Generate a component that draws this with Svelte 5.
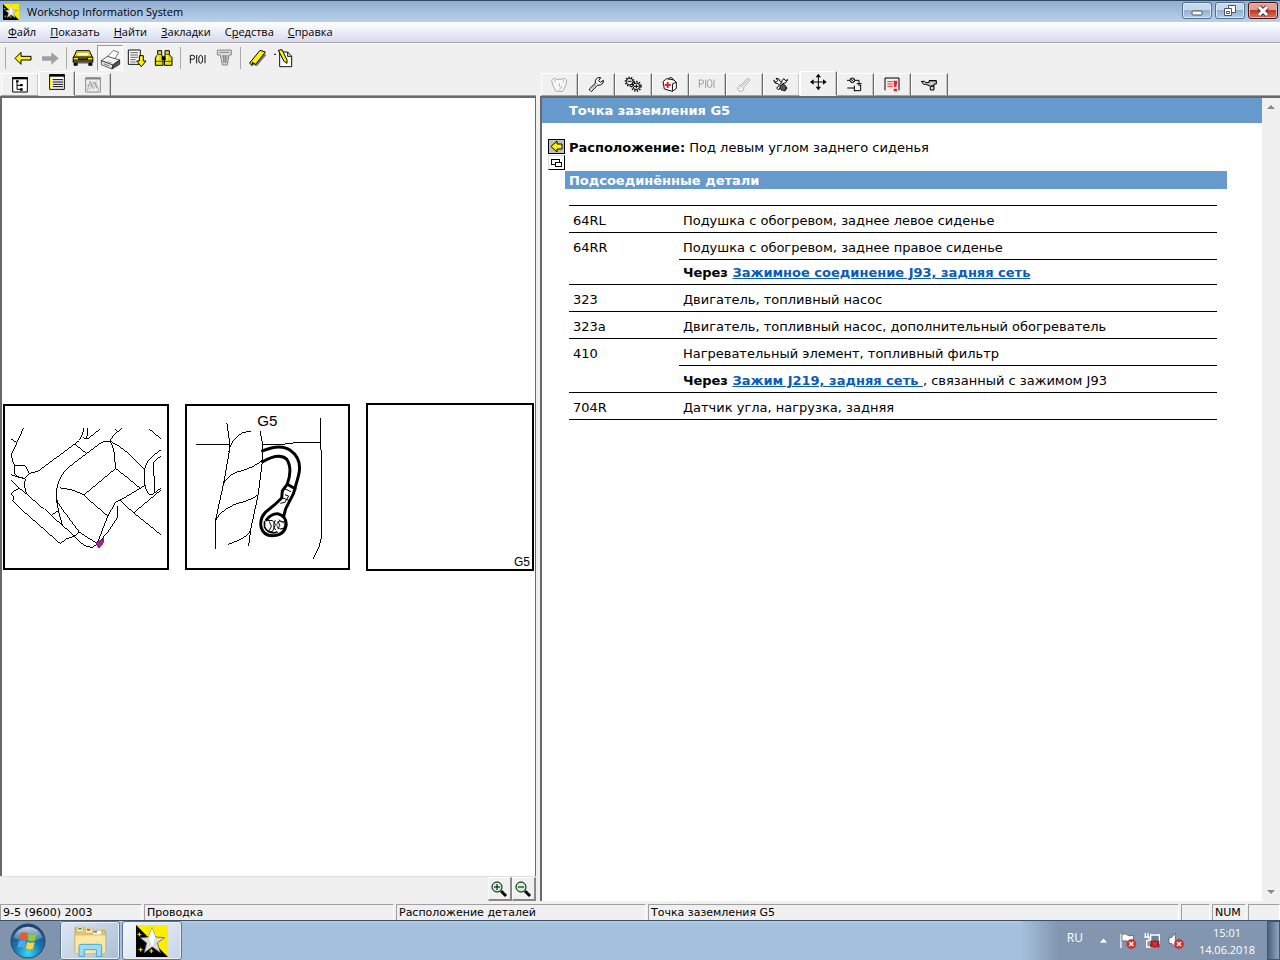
<script>
  const menus = [
    ['', 'Ф', 'айл'],
    ['', 'П', 'оказать'],
    ['', 'Н', 'айти'],
    ['', 'З', 'акладки'],
    ['С', 'р', 'едства'],
    ['', 'С', 'правка']
  ];

  const star =
    '<path d="M0 0H96V96H0z" fill="#ffee00"/><path d="M0 0L96 96H0z" fill="#000"/><path d="M48 8L58 36L86 38L64 54L74 84L49 66L24 84L32 54L12 38L38 36z" fill="#ddd" stroke="#444" stroke-width="2"/><path d="M48 8L58 36L49 66L38 36z" fill="#fff"/><path d="M10 22v12M4 28h12M14 68v12M8 74h12M46 72v12M40 78h12" stroke="#ffee00" stroke-width="3"/>';

  const toolGroups = [
    [
      { label: 'Назад', box: '30 132 78 78', art: '<path d="M45 172L63 154V166H93V177H63V190z" fill="#fff200" stroke="#000" stroke-width="3"/>' },
      { label: 'Вперёд', box: '111 132 78 78', art: '<path d="M126 166H154V154L176 172L154 191V179H126z" fill="#a0a0a0"/>' }
    ],
    [
      { label: 'Автомобиль', box: '210 132 78 78', art: '<path d="M230 149H268L277 168H221z" fill="#f2e200" stroke="#000" stroke-width="3"/><path d="M234 155H264L269 165H229z" fill="#fffdd0" stroke="#555" stroke-width="1"/><path d="M218 168H280V185H218z" fill="#111"/><path d="M221 173H234M264 173H277" stroke="#ffe900" stroke-width="5"/><path d="M236 171H262M222 180H276" stroke="#d8ce30" stroke-width="2"/><path d="M221 185H233V194H221zM265 185H277V194H265z" fill="#000"/><path d="M234 187H264" stroke="#998" stroke-width="3"/>' },
      { label: 'Печать', on: true, box: '294 132 78 78', art: '<path d="M322 164L340 145L356 151L344 172z" fill="#fff" stroke="#333" stroke-width="2"/><path d="M304 176L322 163L359 174L338 189z" fill="#f4f4f4" stroke="#111" stroke-width="2"/><path d="M304 176V188L336 201L338 189z" fill="#eee" stroke="#111" stroke-width="2"/><path d="M338 189L359 174V187L336 201z" fill="#555" stroke="#111" stroke-width="2"/><path d="M311 185L329 192" stroke="#777" stroke-width="3"/><path d="M321 178L337 183" stroke="#888" stroke-width="2"/>' },
      { label: 'Документ', box: '372 132 78 78', art: '<path d="M385 147H421V190H385z" fill="#fff" stroke="#111" stroke-width="3"/><path d="M391 155H414M391 162H414M391 169H414M391 176H407M391 183H407" stroke="#111" stroke-width="2"/><path d="M418 164H430V180H438L424 197L410 180H418z" fill="#fff200" stroke="#000" stroke-width="3"/>' },
      { label: 'Найти', box: '453 132 78 78', art: '<path d="M473 149H485V161L489 170V193H466V170L473 161zM495 149H508V161L516 170V193H493V170L495 161z" fill="#e5df00" stroke="#000" stroke-width="3"/><path d="M485 166H497V177H485z" fill="#000"/><path d="M474 160V187M501 160V187" stroke="#ffffa0" stroke-width="3"/><path d="M466 181H489M493 181H516M473 160H485M496 160H509" stroke="#000" stroke-width="2"/>' }
    ],
    [
      { label: 'PIOI', box: '549 132 78 78', art: '<path d="M568 187V163H575Q581 163 581 169Q581 175 575 175H568M587 162V187M612 162V187" fill="none" stroke="#111" stroke-width="3"/><ellipse cx="599" cy="175" rx="6" ry="12" fill="none" stroke="#111" stroke-width="3"/>' },
      { label: 'Телефон', box: '630 132 78 78', art: '<path d="M649 147H691V162H684L679 192H664L658 162H649z" fill="#ddd" stroke="#858585" stroke-width="3"/><path d="M655 154H685M663 165H681M665 171H680M666 177H679M668 183H677M668 163V186M674 163V186" stroke="#858585" stroke-width="3"/>' }
    ],
    [
      { label: 'Закладка', box: '735 132 78 78', art: '<path d="M752 188L783 150L799 162L771 195L760 192z" fill="#777"/><path d="M749 186L780 148L796 153L767 190L757 184L756 194z" fill="#fff200" stroke="#000" stroke-width="3"/>' },
      { label: 'Заметка', box: '816 132 78 78', art: '<path d="M839 153H863L875 166V197H839z" fill="#fff" stroke="#111" stroke-width="3"/><path d="M863 153V166H875" fill="none" stroke="#111" stroke-width="3"/><path d="M835 148L846 146L861 177V187L852 181z" fill="#fff200" stroke="#000" stroke-width="3"/><path d="M822 160H828" stroke="#000" stroke-width="3"/>' }
    ]
  ];

  const leftTabs = [
    { label: 'Структура', box: '30 220 60 60', art: '<path d="M38 231H82V274H38z" fill="#fff" stroke="#000" stroke-width="3"/><path d="M37 229H83V236H37z"/><path d="M51 242V266H61M51 254H60" fill="none" stroke="#000" stroke-width="3"/><path d="M48 239H56V245H48zM60 250H68V257H60zM60 263H68V270H60z"/>' },
    { label: 'Иллюстрации', on: true, box: '141 217 60 60', art: '<path d="M149 225H193V269H149z" fill="#fff" stroke="#000" stroke-width="3"/><path d="M148 224H194V231H148z"/><path d="M158 240H189M158 247H189M158 254H189M158 261H189" stroke="#000" stroke-width="3"/><path d="M152 234V266" stroke="#ffe800" stroke-width="4"/>' },
    { label: 'Графики', box: '252 220 60 60', art: '<g fill="none" stroke="#888" stroke-width="3"><path d="M260 231H304V274H260z"/><path d="M260 234H304" stroke-width="5"/><path d="M265 269L273 241L283 265L291 248L299 270M264 254H274L280 246H287L294 263M270 268L282 252L294 240" stroke-width="2"/></g>' }
  ];

  const rightTabs = [
    { label: 'Характеристики', box: '57 24 60 60', art: '<path d="M65 43L72 37L80 40H95L103 37L110 43L108 56L98 76H78L68 56z" fill="#f8f8f8" stroke="#888" stroke-width="2"/><path d="M75 43V49M100 43V49M88 52V62M96 60L88 72" stroke="#888" stroke-width="2"/>' },
    { label: 'Ремонт', box: '171 24 60 60', art: '<path d="M183 73L187 77L205 58Q216 59 222 51L223 43L214 49L209 44L215 35Q203 33 199 44V52L181 69z" fill="#fff" stroke="#000" stroke-width="3"/><path d="M187 70L205 51" stroke="#555" stroke-width="2"/>' },
    { label: 'Агрегаты', box: '282 24 60 60', art: '<g fill="#eee" stroke="#000" stroke-width="3"><circle cx="302" cy="47" r="10"/><circle cx="302" cy="47" r="13" fill="none" stroke-width="4" stroke-dasharray="4 4"/><circle cx="322" cy="61" r="10"/><circle cx="322" cy="61" r="14" fill="none" stroke-width="5" stroke-dasharray="4 4"/><path d="M296 46H308M315 61H329M322 55V67"/></g>' },
    { label: 'Диагностика', box: '396 24 60 60', art: '<path d="M405 47L416 38L438 42L445 49V67L433 76L409 69z" fill="#fff" stroke="#111" stroke-width="3"/><path d="M420 39Q430 29 438 43M433 76L434 53L445 49" fill="none" stroke="#111" stroke-width="3"/><path d="M419 48V66M410 57H428" stroke="#ee1c24" stroke-width="6"/>' },
    { label: 'PIOI', box: '504 24 60 60', art: '<path d="M511 65V42H518Q524 42 524 48Q524 54 518 54H511M530 41V66M555 41V66" fill="none" stroke="#777" stroke-width="2"/><ellipse cx="542" cy="53" rx="7" ry="12" fill="none" stroke="#777" stroke-width="2"/>' },
    { label: 'Датчики', box: '615 24 60 60', art: '<path d="M637 57L655 37L663 43L644 64Q646 76 635 76Q624 75 626 65Q629 58 637 57zM632 68L658 41" fill="#f8f8f8" stroke="#888" stroke-width="2"/>' },
    { label: 'Обслуживание', box: '726 24 60 60', art: '<path d="M734 43L741 49L746 44L741 37Q752 36 753 46L774 66L768 74L747 53Q736 54 734 43z" fill="#fff" stroke="#000" stroke-width="3"/><path d="M761 53L770 50L776 41L769 44L765 38Q757 42 758 50L743 66L749 72z" fill="#fff" stroke="#000" stroke-width="3"/><path d="M752 60L764 54L772 62L768 75L756 72z" fill="#555" stroke="#000" stroke-width="2"/>' },
    { label: 'Расположение', on: true, box: '837 17 60 60', art: '<path d="M868 26V68M847 47H889" stroke="#000" stroke-width="3"/><path d="M868 22L876 33H860zM868 72L876 61H860zM843 47L854 39V55zM893 47L882 39V55z"/>' },
    { label: 'Схемы', box: '951 24 60 60', art: '<g fill="none" stroke="#000" stroke-width="3"><circle cx="973" cy="43" r="7"/><path d="M968 38L978 48M978 38L968 48" stroke-width="2"/><path d="M957 43H966M980 43H993V53M986 53H1001M990 57H998V74H979M958 66H979M979 59V76"/></g>' },
    { label: 'Неисправности', box: '1059 24 60 60', art: '<path d="M1068 73V36H1110V73" fill="none" stroke="#000" stroke-width="3"/><path d="M1075 47H1091M1075 54H1091M1075 61H1091" stroke="#e33" stroke-width="3"/><path d="M1093 44H1105L1102 63H1096zM1094 68H1104V76H1094z" fill="#ee1c24"/>' },
    { label: 'Инструмент', box: '1170 24 60 60', art: '<path d="M1177 46H1186L1191 50H1200V44H1222V54H1215V72H1204V60L1190 55H1184z" fill="#ccc" stroke="#000" stroke-width="3"/><path d="M1200 44H1222M1206 60H1215" fill="none" stroke="#000" stroke-width="4"/>' }
  ];

  const parts = [
    { code: '64RL', text: 'Подушка с обогревом, заднее левое сиденье' },
    { code: '64RR', text: 'Подушка с обогревом, заднее правое сиденье', link: 'Зажимное соединение J93, задняя сеть', tail: '' },
    { code: '323', text: 'Двигатель, топливный насос' },
    { code: '323a', text: 'Двигатель, топливный насос, дополнительный обогреватель' },
    { code: '410', text: 'Нагревательный элемент, топливный фильтр', link: 'Зажим J219, задняя сеть ', tail: ', связанный с зажимом J93' },
    { code: '704R', text: 'Датчик угла, нагрузка, задняя' }
  ];

  const status = ['9-5 (9600) 2003', 'Проводка', 'Расположение деталей', 'Точка заземления G5', '', 'NUM', ''];
</script>

{#snippet icon(item, size)}
  <svg width={size} height={size} viewBox={item.box} aria-hidden="true">{@html item.art}</svg>
{/snippet}

{#snippet tabs(list, name)}
  <div class="tabs" role="tablist" aria-label={name}>
    {#each list as tab}
      <button class="tab" class:on={tab.on} role="tab" aria-selected={!!tab.on} aria-label={tab.label}>
        {@render icon(tab, 20)}
      </button>
    {/each}
    <span class="tabfill"></span>
  </div>
{/snippet}

<div class="screen">
  <header class="titlebar">
    {@render icon({ box: '0 0 96 96', art: star }, 16)}
    <h1>Workshop Information System</h1>
    <div class="winbtns">
      <button aria-label="Свернуть"><svg width="28" height="16" viewBox="0 0 28 16"><rect x="9" y="8" width="10" height="4" rx="1" fill="#fff" stroke="#4a5566" /></svg></button>
      <button aria-label="Восстановить"><svg width="28" height="16" viewBox="0 0 28 16" fill="#fff" stroke="#4a5566"><path d="M12.500 2.500h7v7h-7z" /><path d="M8.500 5.500h7v7h-7zM10.500 8.500h3v2h-3z" /></svg></button>
      <button class="close" aria-label="Закрыть"><svg width="28" height="16" viewBox="0 0 28 16"><path d="M10 4L18 12M18 4L10 12" stroke="#5a3035" stroke-width="5" /><path d="M10 4L18 12M18 4L10 12" stroke="#fff" stroke-width="3" /></svg></button>
    </div>
  </header>

  <nav class="menubar">
    {#each menus as [a, key, b]}
      <button>{a}<u>{key}</u>{b}</button>
    {/each}
  </nav>

  <div class="toolbar">
    {#each toolGroups as group}
      <div class="group">
        {#each group as tool}
          <button class:on={tool.on} aria-label={tool.label}>{@render icon(tool, 26)}</button>
        {/each}
      </div>
    {/each}
  </div>

  <main>
    <section class="left">
      {@render tabs(leftTabs, 'Слева')}
      <div class="canvas">
        <div class="figure">
          <svg viewBox="15 15 489 489" fill="none" stroke="#000" stroke-width="3" shape-rendering="crispEdges">
            <path d="M71 82L52 124L34 162Q36 180 44 196M34 115L52 126M44 198Q50 191 66 194Q78 191 82 206L88 219L76 234Q58 234 45 222Q42 208 44 198M34 223L52 229L76 235M88 219Q104 217 118 210L226 130L240 119L248 104L254 82M266 82L262 114M250 108Q258 118 266 114L302 85M226 130L262 159" />
            <path d="M34 241L58 263L80 281L154 346L189 376L222 406M76 235Q70 258 80 281M58 265L40 274L34 280L42 290L38 302L60 324L182 431L202 416L222 410L240 397M222 406Q242 430 262 441L280 442L290 436M154 346L178 331" />
            <path d="M170 296Q168 240 200 208Q218 190 262 159L304 127Q320 119 332 121Q340 130 344 148L350 204L256 282V288L326 348M180 262Q220 266 256 284M170 296Q178 316 204 348L240 397L292 430M170 296Q176 340 189 376M332 121L342 106L368 82M350 86L358 94M332 121Q360 134 386 156L436 206M350 204L388 234L424 264L372 295L350 306L326 348Q310 390 294 430M424 264L438 255M364 302L404 338L486 404M404 338L486 270M356 318V350Q326 402 292 434M450 84L486 113M486 148Q436 180 436 216Q436 260 446 276Q454 290 466 278Q468 262 464 188Q472 172 486 168M464 280L486 264" />
            <path d="M290 428L315 416L312 430L299 446z" fill="#a3238e" stroke="#6d1565" stroke-width="2" />
          </svg>
        </div>
        <div class="figure">
          <svg viewBox="21 15 490 490" fill="none" stroke="#000" stroke-width="3">
            <text x="234" y="77" font-size="46" fill="#000" stroke="none">G5</text>
            <g shape-rendering="crispEdges">
              <path d="M48 133H148M142 68L149 116V154L132 250L106 368V447M242 90L250 130V178L237 282L214 390L208 440M427 52V148L430 160V382Q430 420 420 446L403 479M250 131L340 130L344 127H427" />
              <path d="M147 155Q154 116 190 96L214 91M133 248Q146 224 174 215Q224 202 249 180M109 360Q124 332 166 313Q222 298 236 284M145 434Q202 418 214 392" />
            </g>
            <g stroke-width="9" stroke-linecap="round" stroke-linejoin="round">
              <path d="M250 151Q304 128 334 149Q372 176 359 226L344 280L320 327L314 350M250 184Q300 155 323 176Q342 204 325 252L310 272L308 294L286 315L260 336Q240 356 246 384Q254 410 284 408Q318 406 322 374Q322 350 298 342Q278 340 262 360M325 252L349 266" />
              <path d="M256 365V382Q270 406 294 397" stroke-width="5" />
            </g>
            <path d="M314 264L336 275M307 292L332 302L323 320M318 284L329 288L318 307L304 310M266 362H280L289 374L280 396L264 394M270 365L277 379L270 393M289 361Q278 378 290 391M299 360L309 367L318 365M304 388L315 386M297 364L302 377L297 388" />
            <circle cx="305" cy="376" r="12" stroke-width="2" />
          </svg>
        </div>
        <div class="figure last"><span>G5</span></div>
      </div>
      <div class="zoombar">
        <button aria-label="Увеличить"><svg width="20" height="20" viewBox="0 0 20 20"><circle cx="8" cy="8" r="5" fill="#c8f5cf" stroke="#000" /><path d="M5 8H11M8 5V11" stroke="#000" stroke-width="1" /><path d="M12 12L17 17" stroke="#000" stroke-width="3" /></svg></button>
        <button aria-label="Уменьшить"><svg width="20" height="20" viewBox="0 0 20 20"><circle cx="8" cy="8" r="5" fill="#c8f5cf" stroke="#000" /><path d="M5 8H11" stroke="#000" stroke-width="1" /><path d="M12 12L17 17" stroke="#000" stroke-width="3" /></svg></button>
      </div>
    </section>

    <section class="right">
      {@render tabs(rightTabs, 'Справа')}
      <div class="view">
        <article>
          <h2>Точка заземления G5</h2>
          <div class="location">
            <div class="mini">
              <button class="grey" aria-label="Назад"><svg width="16" height="15" viewBox="0 0 16 15"><path d="M2 6.500L8 1V4H13V9H8V12z" fill="#fff200" stroke="#000" /></svg></button>
              <button aria-label="Показать"><svg width="16" height="14" viewBox="0 0 16 14" fill="none" stroke="#000" shape-rendering="crispEdges"><path d="M2.500 3.500h8v5h-8z" /><path d="M6.500 6.500h6v4h-6z" fill="#fff" /></svg></button>
            </div>
            <p><b>Расположение:</b> Под левым углом заднего сиденья</p>
          </div>
          <h3>Подсоединённые детали</h3>
          <table>
            <tbody>
              {#each parts as part}
                <tr>
                  <th scope="row" rowspan={part.link ? 2 : 1}>{part.code}</th>
                  <td>{part.text}</td>
                </tr>
                {#if part.link}
                  <tr>
                    <td class:tight={!part.tail}><b>Через <a href="#part">{part.link}</a></b>{part.tail}</td>
                  </tr>
                {/if}
              {/each}
            </tbody>
          </table>
        </article>
        <div class="scroll">
          <svg width="8" height="4" viewBox="0 0 8 4"><path d="M0 4L4 0L8 4z" fill="#888" /></svg>
          <svg width="8" height="4" viewBox="0 0 8 4"><path d="M0 0L4 4L8 0z" fill="#888" /></svg>
        </div>
      </div>
    </section>
  </main>

  <div class="status">
    {#each status as cell}<span>{cell}</span>{/each}
  </div>

  <footer class="taskbar">
    <button class="start" aria-label="Пуск">
      <svg width="36" height="36" viewBox="0 0 108 108">
        <defs>
          <radialGradient id="orb" cx="50%" cy="85%" r="85%"><stop offset="0" stop-color="#3fd8f4" /><stop offset=".45" stop-color="#1878b0" /><stop offset="1" stop-color="#1c3f70" /></radialGradient>
          <linearGradient id="gloss" x2="0" y2="1"><stop offset="0" stop-color="#fff" stop-opacity=".75" /><stop offset="1" stop-color="#fff" stop-opacity=".1" /></linearGradient>
        </defs>
        <circle cx="54" cy="54" r="51" fill="url(#orb)" stroke="#2a4668" stroke-width="3" />
        <path d="M10 44A46 46 0 0 1 98 44Q54 66 10 44z" fill="url(#gloss)" />
        <path d="M32 31Q42 24 53 31L49 51Q38 45 27 51z" fill="#ee5a24" />
        <path d="M57 33Q68 38 80 32L75 53Q64 58 53 52z" fill="#8fc93a" />
        <path d="M26 55Q37 49 48 55L44 75Q33 69 22 75z" fill="#49a8ee" />
        <path d="M52 57Q63 62 74 57L69 77Q58 82 47 76z" fill="#ffd23a" />
      </svg>
    </button>
    <button class="app" aria-label="Проводник">
      <svg width="34" height="32" viewBox="0 0 102 96">
        <path d="M6 8H34L40 16H92Q98 16 98 22V84H6z" fill="#e9c565" stroke="#b8923c" stroke-width="2" />
        <path d="M12 6H30V20H12zM38 10H60V24H38zM58 16H86V30H58z" fill="#fffbe8" stroke="#c7a955" stroke-width="2" />
        <path d="M16 9H26V14H16z" fill="#2fa35a" /><path d="M42 12H52V17H42z" fill="#d9452f" /><path d="M62 18H72V23H62z" fill="#3c8cd0" />
        <path d="M6 30H98V86H6z" fill="#fae8a4" stroke="#d5b763" stroke-width="2" />
        <path d="M18 94V64Q18 58 24 58H80Q86 58 86 64V94H70V74H34V94z" fill="#9bdcf5" stroke="#4ea5d0" stroke-width="3" />
      </svg>
    </button>
    <button class="app active" aria-label="Workshop Information System">{@render icon({ box: '0 0 96 96', art: star }, 32)}</button>
    <div class="tray">
      <span class="lang">RU</span>
      <svg width="9" height="5" viewBox="0 0 9 5"><path d="M0 5L4.500 0L9 5z" fill="#fff" stroke="#566" stroke-width=".5" /></svg>
      <svg width="64" height="18" viewBox="0 0 192 54">
        <path d="M3 6V48" stroke="#fff" stroke-width="4" /><path d="M6 7Q16 3 24 10Q32 13 40 10V30Q30 33 24 28Q14 24 6 28z" fill="#fff" stroke="#445" stroke-width="2" />
        <circle cx="34" cy="36" r="14" fill="#d9302c" stroke="#9c1f1c" /><path d="M28 30L40 42M40 30L28 42" stroke="#fff" stroke-width="4" />
        <path d="M76 3V18M84 3V18M73 15H87V26H80V45H97" fill="none" stroke="#fff" stroke-width="4" /><path d="M92 9H118V34H92z" fill="#6d7f95" stroke="#fff" stroke-width="4" />
        <path d="M91 26H118V46H91z" fill="#a31419" /><path d="M97 29L112 43M112 29L97 43" stroke="#e83b3f" stroke-width="4" />
        <path d="M147 17H154L166 4V45L154 34H147z" fill="#fff" stroke="#445" stroke-width="2" />
        <circle cx="177" cy="36" r="14" fill="#d9302c" stroke="#9c1f1c" /><path d="M171 30L183 42M183 30L171 42" stroke="#fff" stroke-width="4" />
      </svg>
      <time><span>15:01</span><span>14.06.2018</span></time>
    </div>
    <button class="desktop" aria-label="Показать рабочий стол"></button>
  </footer>
</div>

<style>
  :global(body) { margin: 0; }
  * { box-sizing: border-box; }
  button { padding: 0; border: 0; background: none; font: inherit; color: inherit; }
  svg { display: block; }
  .screen {
    min-height: 100vh;
    display: flex;
    flex-direction: column;
    background: #f0f0f0;
    font: 11px "Open Sans", "Noto Sans", sans-serif;
    color: #000;
  }

  .titlebar {
    display: flex;
    align-items: center;
    gap: 8px;
    height: 22px;
    padding-left: 3px;
    border-top: 1px solid #2d4661;
    background: linear-gradient(#8fadcf, #a5c0de 50%, #b9d0ea);
  }
  h1 { margin: 0; flex: 1; font-size: 11px; line-height: 20px; font-weight: 400; }
  .winbtns { display: flex; gap: 3px; align-self: flex-start; padding: 1px 2px 0 0; }
  .winbtns button {
    width: 30px;
    height: 17px;
    display: grid;
    place-items: center;
    border: 1px solid #52708f;
    border-radius: 3px;
    background: linear-gradient(#c5d8ec 48%, #94b0cf 50%, #b3cde6);
    box-shadow: inset 0 0 0 1px #dbe8f5;
  }
  .winbtns .close { border-color: #43141c; background: linear-gradient(#e3a093 45%, #bf3a26 50%, #d8785c); box-shadow: inset 0 0 0 1px #eab6aa; }

  .menubar {
    display: flex;
    gap: 14px;
    height: 21px;
    padding: 0 8px;
    background: linear-gradient(#fff, #eef1fa 40%, #d6daee);
    border-bottom: 1px solid #a5a5aa;
    line-height: 20px;
  }

  .toolbar { display: flex; height: 29px; padding: 3px 0 3px 5px; border-top: 1px solid #fff; }
  .group { display: flex; align-items: center; gap: 1px; padding: 0 3px; border-left: 1px solid #aaa; }
  .group:first-child { padding-left: 4px; }
  .group:last-child { padding-left: 4px; }
  .group button { width: 26px; height: 26px; }
  .group button.on { border: 1px solid; border-color: #999 #fff #fff #999; background: #f6f6f6; display: grid; place-items: center; }

  main { flex: 1; display: grid; grid-template-columns: minmax(0, 42fr) minmax(0, 58fr); gap: 4px; }
  section { display: flex; flex-direction: column; min-width: 0; }
  .tabs { display: flex; align-items: flex-end; height: 24px; flex: none; padding-left: 1px; }
  .tab {
    width: 37px;
    height: 23px;
    display: grid;
    place-items: center;
    padding-bottom: 2px;
    border-top: 1px solid #fff;
    border-right: 1px solid #696969;
    border-bottom: 1px solid #a0a0a0;
    box-shadow: inset -1px 0 #c8c8c8, inset 1px 0 #fff;
  }
  .tab.on { height: 25px; border-bottom-color: #f0f0f0; padding-bottom: 4px; }
  .tab:has(+ .on) { border-right-color: #fff; }
  .tabfill { flex: 1; border-bottom: 1px solid #a0a0a0; }
  .left .tab { width: 36px; }
  .left .tab:first-child { width: 38px; }
  .canvas {
    flex: 1;
    display: flex;
    align-items: center;
    gap: 16px;
    padding: 0 1px;
    border: solid #696969;
    border-width: 2px 1px 0 2px;
    background: #fff;
  }
  .figure { flex: 1; min-width: 0; aspect-ratio: 1; border: 2px solid #000; font-family: "Liberation Sans", sans-serif; }
  .figure svg { width: 100%; height: 100%; }
  .figure.last { display: flex; align-items: flex-end; justify-content: flex-end; padding-right: 2px; font-size: 12px; line-height: 14px; }
  .zoombar { display: flex; justify-content: flex-end; height: 25px; border-top: 1px solid #ddd; }
  .zoombar button {
    width: 24px;
    display: grid;
    place-items: center;
    border: solid;
    border-width: 1px 2px 2px 1px;
    border-color: #fff #888 #888 #fff;
  }

  .view { flex: 1; display: flex; border: solid #696969; border-width: 2px 0 0 2px; background: #fff; }
  article { flex: 1; min-width: 0; font: 13px/16px "DejaVu Sans", Verdana, sans-serif; }
  h2, h3 { margin: 0; background: #6699cc; color: #fff; font-size: 13px; }
  h2 { padding: 0 27px; line-height: 25px; }
  .location { display: flex; gap: 4px; padding: 16px 6px 0; }
  .location p { margin: 0; padding-top: 1px; }
  .mini { display: flex; flex-direction: column; gap: 1px; }
  .mini button { height: 15px; border: 1px solid; border-color: #ddd #000 #000 #ddd; overflow: hidden; width: 17px; }
  .mini .grey { background: #c0c0c0; border-color: #000; }
  h3 { margin: 1px 35px 16px 23px; padding: 2px 4px 0; line-height: 16px; }
  table { width: calc(100% - 72px); margin-left: 27px; border-collapse: collapse; border-bottom: 1px solid #000; }
  th, td { height: 27px; padding: 2px 4px 0; border-top: 1px solid #000; font-weight: 400; text-align: left; vertical-align: top; line-height: 24px; padding-top: 3px; line-height: 23px; }
  th { width: 110px; }
  td.tight { height: 25px; padding-top: 1px; }
  a { color: #0a5cb8; text-decoration: underline; white-space: pre; }
  .scroll { width: 18px; flex: none; display: flex; flex-direction: column; align-items: center; justify-content: space-between; padding: 7px 0; background: #f0f0f0; }

  .status {
    display: grid;
    grid-template-columns: 142px 250px 250px 1fr 29px 34px 32px;
    gap: 2px;
    height: 19px;
    padding-top: 3px;
    background: #f0f0f0;
    font: 11px/15px "DejaVu Sans", Verdana, sans-serif;
  }
  .status span { border: 1px solid; border-color: #a0a0a0 #fff #fff #a0a0a0; padding-left: 2px; white-space: nowrap; }

  .taskbar { display: flex; height: 40px; border-top: 1px solid #3a5068; background: linear-gradient(#b5cbe2, #a5c0dc 10%); color: #fff; }
  .start { width: 60px; padding-left: 10px; background: #8094ad; }
  .app {
    width: 60px;
    display: grid;
    place-items: center;
    margin-right: 2px;
    border: 1px solid #5b7592;
    border-radius: 3px;
    background: linear-gradient(135deg, #dde7f2, #a9bfd8);
    box-shadow: inset 0 0 0 1px #e8f0f8;
  }
  .app.active { background: linear-gradient(135deg, #f6f8fb, #c5d4e5); }
  .tray {
    margin-left: auto;
    display: flex;
    align-items: center;
    padding: 0 12px 0 46px;
    background: linear-gradient(90deg, #a5c0dc, #8296b0 38px);
  }
  .lang { margin: 0 16px 6px 0; font-size: 12px; }
  .tray svg { flex: none; margin-right: 12px; }
  .tray svg + svg { margin-right: 15px; }
  time { display: flex; flex-direction: column; align-items: center; line-height: 17px; }
  .desktop { width: 13px; border: 1px solid #42566e; background: linear-gradient(90deg, #4d627c, #90a5bf); }
</style>
